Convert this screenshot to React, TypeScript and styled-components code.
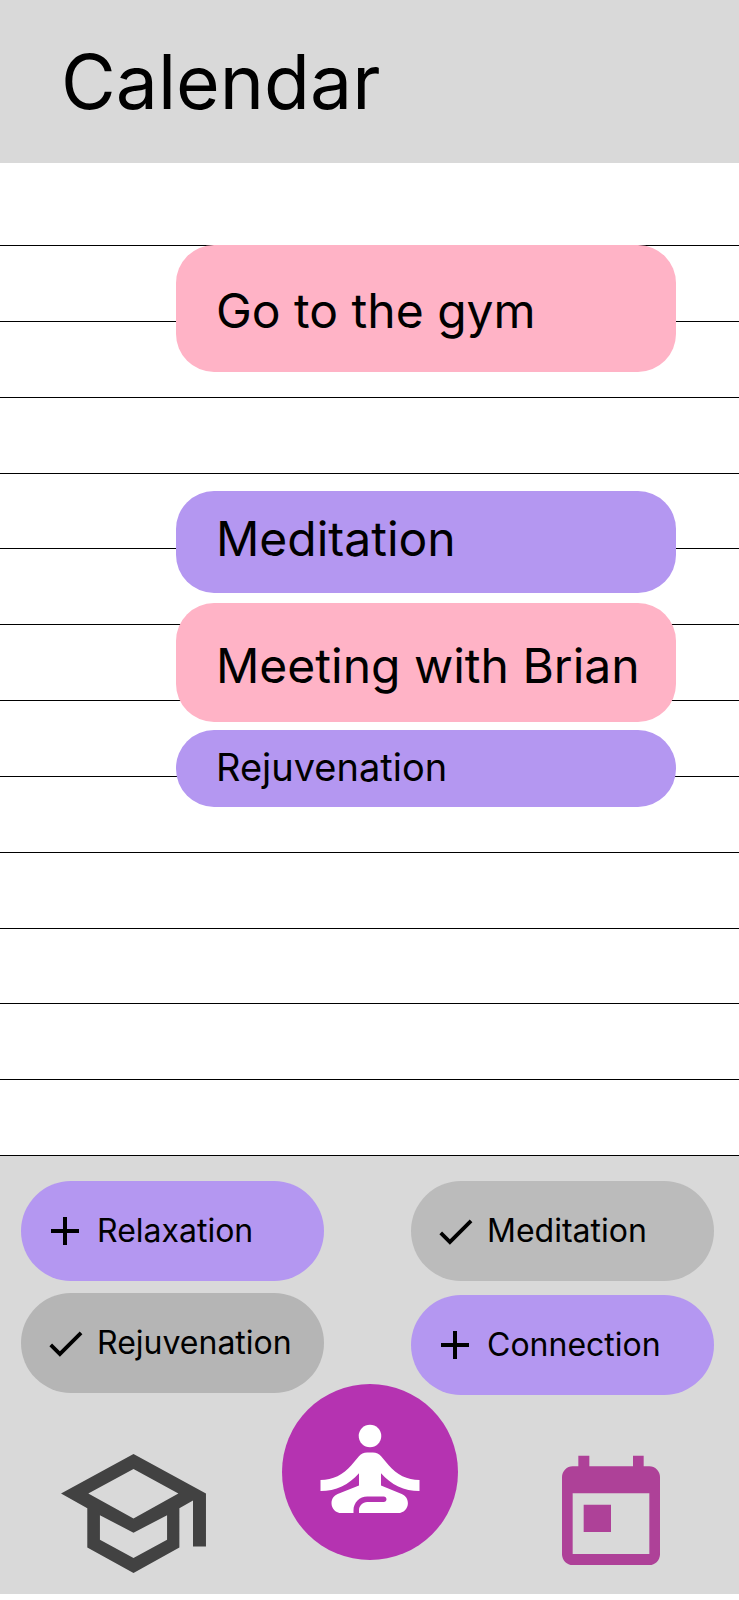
import React from "react";
import styled, { createGlobalStyle } from "styled-components";

const colors = {
  surface: "#d9d9d9",
  pink: "#ffb3c6",
  purple: "#b497f1",
  magenta: "#b533b1",
  calendar: "#ae4198",
  ink: "#000000",
  hat: "#424242",
};

const GlobalStyle = createGlobalStyle`
  *, *::before, *::after { box-sizing: border-box; }
  body {
    margin: 0;
    background: #ffffff;
    color: ${colors.ink};
    font-family: Inter, "Liberation Sans", sans-serif;
  }
`;

const Page = styled.div`
  display: flex;
  flex-direction: column;
`;

const Header = styled.header`
  padding: 36px 61px 35px;
  background: ${colors.surface};
`;

const Title = styled.h1`
  margin: 0;
  font-size: 75px;
  line-height: 92px;
  font-weight: 400;
`;

const Schedule = styled.main`
  display: grid;
  grid-template-columns: 1fr;
  padding-top: 82px;
`;

const HourLines = styled.div`
  grid-area: 1 / 1;
  display: grid;
  grid-auto-rows: 1fr;
`;

const HourLine = styled.div`
  border-top: 1px solid ${colors.ink};
`;

const EventList = styled.ul`
  grid-area: 1 / 1;
  display: flex;
  flex-direction: column;
  margin: 0;
  padding: 0 63px 348px 176px;
  list-style: none;
`;

interface EventProps {
  $tone: "pink" | "purple";
  $height: number;
  $inset: number;
  $gap: number;
  $small?: boolean;
}

const Event = styled.li<EventProps>`
  min-height: ${(p) => p.$height}px;
  margin-top: ${(p) => p.$gap}px;
  padding: ${(p) => p.$inset}px 16px 0 40px;
  border-radius: 38px;
  background: ${(p) => colors[p.$tone]};
  font-size: ${(p) => (p.$small ? 38 : 48)}px;
  line-height: ${(p) => (p.$small ? 46 : 58)}px;
`;

const Footer = styled.footer`
  border-top: 1px solid ${colors.ink};
  background: ${colors.surface};
`;

const Suggestions = styled.div`
  display: flex;
  justify-content: space-between;
  padding: 25px 25px 0 21px;
`;

const PillColumn = styled.div<{ $gap: number }>`
  display: flex;
  flex-direction: column;
  gap: ${(p) => p.$gap}px;
  width: 303px;
`;

const Pill = styled.button<{ $fill: string }>`
  display: flex;
  align-items: center;
  gap: 8px;
  height: 100px;
  padding: 0 0 0 20px;
  border: 0;
  border-radius: 50px;
  background: ${(p) => p.$fill};
  color: inherit;
  font: inherit;
  font-size: 32px;
  line-height: 40px;
  cursor: pointer;
`;

const PillIcon = styled.span`
  display: flex;
  justify-content: center;
  width: 48px;
`;

const Nav = styled.nav`
  position: relative;
  display: grid;
  grid-template-columns: 1fr auto 1fr;
  align-items: start;
  margin-top: -11px;
  padding: 0 61px 21px;
`;

const NavLink = styled.a<{ $end?: boolean }>`
  display: flex;
  justify-self: ${(p) => (p.$end ? "end" : "start")};
  padding: 70px ${(p) => (p.$end ? 18 : 0)}px 0 0;
`;

const MeditateLink = styled.a`
  display: flex;
  align-items: center;
  justify-content: center;
  width: 176px;
  height: 176px;
  padding-bottom: 6px;
  border-radius: 50%;
  background: ${colors.magenta};
`;

const PlusIcon = () => (
  <svg width="48" height="48" viewBox="0 0 24 24" aria-hidden="true">
    <path d="M19 13h-6v6h-2v-6H5v-2h6V5h2v6h6z" />
  </svg>
);

const CheckIcon = () => (
  <svg width="45" height="45" viewBox="0 0 24 24" aria-hidden="true">
    <path d="M9 16.17 4.83 12l-1.42 1.41L9 19 21 7l-1.41-1.41z" />
  </svg>
);

const SchoolIcon = () => (
  <svg width="145" height="119" viewBox="63 72 436 358" fill={colors.hat} aria-hidden="true">
    <path
      fillRule="evenodd"
      d="M63 191 281 72 499 191V350H460V212L419 235V353L281 430 142 353V235ZM145 191 281 266 416 191 281 117ZM180 256V330L281 385 382 330V256L281 309Z"
    />
  </svg>
);

const MeditateIcon = () => (
  <svg width="132" height="132" viewBox="0 0 24 24" fill="#ffffff" aria-hidden="true">
    <circle cx="12" cy="6" r="2.05" />
    <path d="M21 16v-2c-2.24 0-4.16-.96-5.6-2.68l-1.34-1.6C13.68 9.26 13.12 9 12.53 9h-1.05c-.6 0-1.15.26-1.53.72l-1.34 1.6C7.16 13.04 5.24 14 3 14v2c2.77 0 5.19-1.17 7-3.25V15l-3.88 1.55C5.45 16.82 5 17.48 5 18.21 5 19.2 5.8 20 6.79 20H9v-.5c0-1.38 1.12-2.5 2.5-2.5h3c.28 0 .5.22.5.5s-.22.5-.5.5h-3c-.83 0-1.5.67-1.5 1.5v.5h7.1c.99 0 1.79-.8 1.79-1.79 0-.73-.45-1.39-1.12-1.66L14 15v-2.25c1.81 2.08 4.23 3.25 7 3.25z" />
  </svg>
);

const CalendarIcon = () => (
  <svg width="98" height="111" viewBox="66 42 294 333" fill={colors.calendar} aria-hidden="true">
    <path
      fillRule="evenodd"
      d="M115 47h33v32h131V47h32v32h17a32 32 0 0 1 32 32v232a32 32 0 0 1-32 32H98a32 32 0 0 1-32-32V111a32 32 0 0 1 32-32h17ZM98 160v182h230V160ZM131 194h82v82h-82Z"
    />
  </svg>
);

const events = [
  { name: "Go to the gym", tone: "pink", height: 127, inset: 37, gap: 0 },
  { name: "Meditation", tone: "purple", height: 102, inset: 19, gap: 119 },
  { name: "Meeting with Brian", tone: "pink", height: 119, inset: 34, gap: 10 },
  { name: "Rejuvenation", tone: "purple", height: 77, inset: 14, gap: 8, small: true },
] as const;

const pillColumns = [
  {
    gap: 12,
    pills: [
      { name: "Relaxation", done: false, fill: colors.purple },
      { name: "Rejuvenation", done: true, fill: "#b5b5b5" },
    ],
  },
  {
    gap: 14,
    pills: [
      { name: "Meditation", done: true, fill: "#bbbbbb" },
      { name: "Connection", done: false, fill: colors.purple },
    ],
  },
];

export default function App() {
  return (
    <>
      <GlobalStyle />
      <Page>
        <Header>
          <Title>Calendar</Title>
        </Header>
        <Schedule>
          <HourLines aria-hidden="true">
            {Array.from({ length: 12 }, (_, i) => (
              <HourLine key={i} />
            ))}
          </HourLines>
          <EventList>
            {events.map((e) => (
              <Event
                key={e.name}
                $tone={e.tone}
                $height={e.height}
                $inset={e.inset}
                $gap={e.gap}
                $small={"small" in e}
              >
                {e.name}
              </Event>
            ))}
          </EventList>
        </Schedule>
        <Footer>
          <Suggestions>
            {pillColumns.map((column) => (
              <PillColumn key={column.gap} $gap={column.gap}>
                {column.pills.map((pill) => (
                  <Pill key={pill.name} type="button" aria-pressed={pill.done} $fill={pill.fill}>
                    <PillIcon>{pill.done ? <CheckIcon /> : <PlusIcon />}</PillIcon>
                    <span>{pill.name}</span>
                  </Pill>
                ))}
              </PillColumn>
            ))}
          </Suggestions>
          <Nav aria-label="Main">
            <NavLink href="#learn" aria-label="Learn">
              <SchoolIcon />
            </NavLink>
            <MeditateLink href="#meditate" aria-label="Meditate">
              <MeditateIcon />
            </MeditateLink>
            <NavLink href="#calendar" aria-label="Calendar" aria-current="page" $end>
              <CalendarIcon />
            </NavLink>
          </Nav>
        </Footer>
      </Page>
    </>
  );
}
